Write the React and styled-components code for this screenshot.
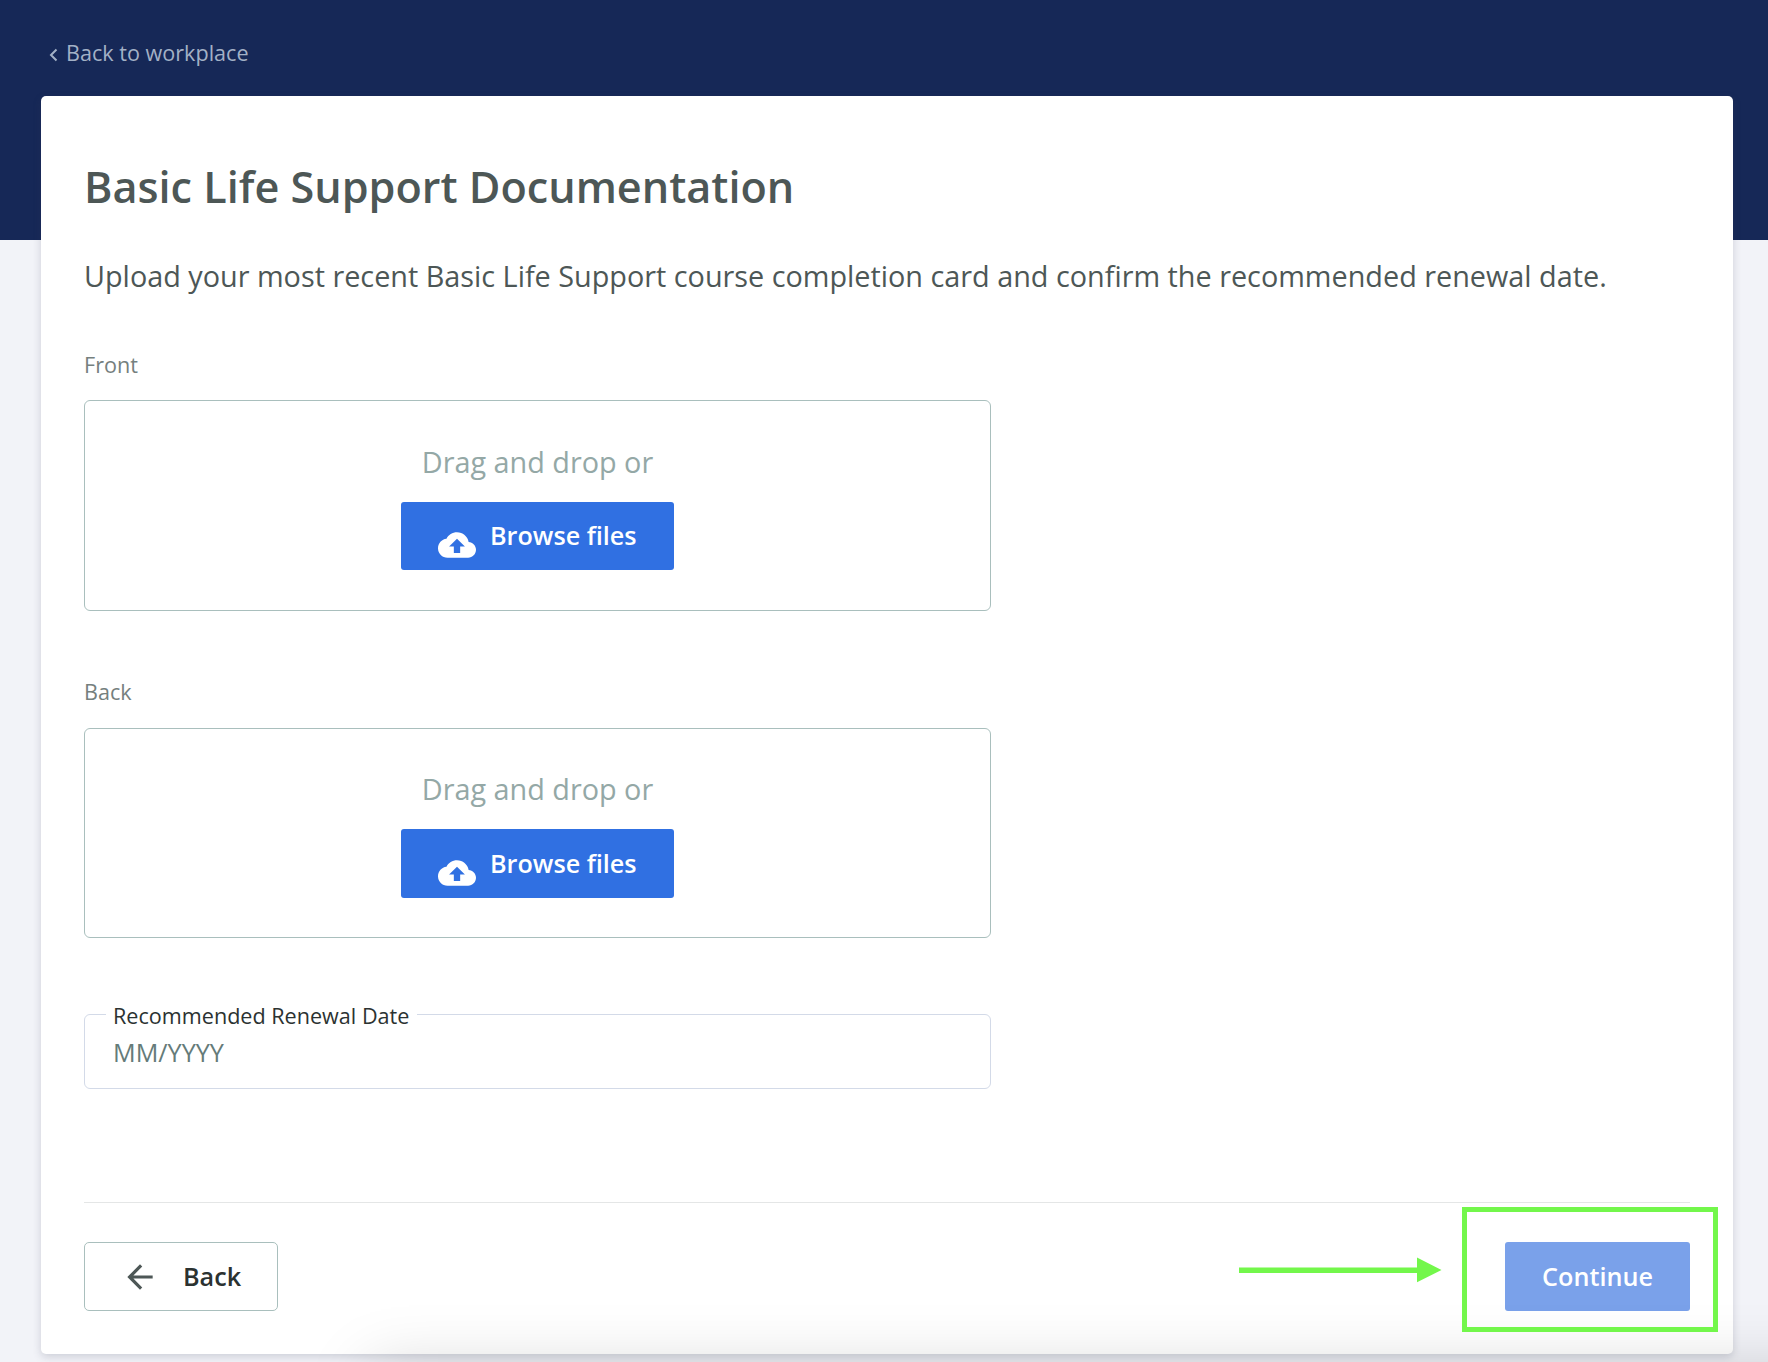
import styled, { createGlobalStyle } from "styled-components";

const GlobalStyle = createGlobalStyle`
  * {
    box-sizing: border-box;
  }

  body {
    margin: 0;
    background: #f2f3f8;
    font-family: "Open Sans", sans-serif;
    overflow: hidden;
  }

  button {
    font-family: inherit;
    margin: 0;
  }
`;

const Page = styled.div`
  position: relative;
  height: 1362px;
  padding: 0 35px 0 41px;
  overflow: hidden;
  background: linear-gradient(#162857 240px, #f2f3f8 240px);
`;

const TopBar = styled.header`
  display: flex;
  align-items: center;
  height: 96px;
  padding: 10px 0 0 8px;
`;

const BackLink = styled.a`
  display: flex;
  align-items: center;
  gap: 8px;
  color: #a3b1c6;
  font-size: 21.6px;
  line-height: 30px;

  svg {
    margin-top: 4px;
  }
`;

const Card = styled.main`
  height: 1258px;
  padding: 62px 43px 0;
  border-radius: 5px;
  background: #fff;
  box-shadow: 0 3px 8px rgba(60, 66, 90, 0.2);
`;

const Title = styled.h1`
  margin: 0;
  color: #4d5756;
  font-size: 43.2px;
  font-weight: 600;
  line-height: 58px;
`;

const Intro = styled.p`
  margin: 40px 0 0;
  color: #4d5756;
  font-size: 28.8px;
  line-height: 40px;
  white-space: nowrap;
`;

const Upload = styled.section`
  width: 907px;
  margin-top: ${props => props.$gap}px;
`;

const Label = styled.div`
  color: #75807e;
  font-size: 21.6px;
  line-height: 30px;
`;

const DropZone = styled.div`
  display: flex;
  flex-direction: column;
  align-items: center;
  height: 210.6px;
  margin-top: 20.4px;
  padding-top: 40.4px;
  border: 1px solid #a9bfbd;
  border-radius: 6px;
`;

const Hint = styled.div`
  color: #94a8a6;
  font-size: 28.8px;
  line-height: 40px;
`;

const BrowseButton = styled.button`
  display: flex;
  align-items: center;
  width: 273px;
  height: 68.4px;
  margin-top: 20px;
  padding: 0 0 0 37px;
  border: 0;
  border-radius: 3px;
  background: #3070e2;
  color: #fff;
  font-size: 25.2px;
  font-weight: 600;

  svg {
    margin: 18.5px 14px 0 0;
  }

  span {
    padding-bottom: 1.2px;
  }
`;

const DateField = styled.fieldset`
  width: 907px;
  height: 87px;
  margin: 63.6px 0 0;
  padding: 0 28px;
  border: 1px solid #d3dae8;
  border-radius: 6px;
`;

const Legend = styled.legend`
  margin-left: -7px;
  padding: 2px 8px 0 7px;
  color: #2b3231;
  font-size: 21.6px;
  line-height: 24px;
`;

const DateInput = styled.input`
  display: block;
  width: 100%;
  height: 36px;
  margin-top: 6px;
  padding: 0;
  border: 0;
  outline: 0;
  background: transparent;
  font-family: inherit;
  font-size: 25.2px;

  &::placeholder {
    color: #657b79;
    opacity: 1;
  }
`;

const Footer = styled.footer`
  display: flex;
  justify-content: space-between;
  margin-top: 113px;
  padding-top: 39px;
  border-top: 1px solid #e4e6e6;
`;

const BackButton = styled.button`
  display: flex;
  align-items: center;
  gap: 24px;
  width: 194px;
  height: 69px;
  padding: 0 0 0 36px;
  border: 1px solid #a9bfbd;
  border-radius: 5px;
  background: #fff;
  color: #2b3231;
  font-size: 25.2px;
  font-weight: 600;

  svg {
    margin-top: 1px;
  }

  span {
    padding-bottom: 1px;
  }
`;

const ContinueButton = styled.button`
  width: 185px;
  height: 69px;
  padding: 0 0 1px;
  border: 0;
  border-radius: 3px;
  background: #7aa1ea;
  color: #fff;
  font-size: 25.2px;
  font-weight: 600;
`;

const Highlight = styled.div`
  position: absolute;
  left: 1462px;
  top: 1207px;
  width: 256px;
  height: 125px;
  border: 5px solid #73f74b;
`;

const Pointer = styled.svg`
  position: absolute;
  left: 1239px;
  top: 1257px;
`;

// soft shade rising from the bottom edge of the window
const Shade = styled.div`
  position: absolute;
  left: 370px;
  right: -100px;
  top: 1368px;
  height: 200px;
  box-shadow: 0 0 60px rgba(0, 0, 0, 0.17);
  pointer-events: none;
`;

const CloudIcon = () => (
  <svg width="38" height="38" viewBox="0 0 24 24" fill="currentColor">
    <path d="M19.35 10.04C18.67 6.59 15.64 4 12 4 9.11 4 6.6 5.64 5.35 8.04 2.34 8.36 0 10.91 0 14c0 3.31 2.69 6 6 6h13c2.76 0 5-2.24 5-5 0-2.64-2.05-4.78-4.65-4.96zM14 13v4h-4v-4H7l5-5 5 5h-3z" />
  </svg>
);

const ArrowIcon = () => (
  <svg width="38" height="38" viewBox="0 0 24 24" fill="#4d5756">
    <path d="M20 11H7.83l5.59-5.59L12 4l-8 8 8 8 1.41-1.41L7.83 13H20v-2z" />
  </svg>
);

const FileUpload = ({ label, gap }) => (
  <Upload $gap={gap}>
    <Label>{label}</Label>
    <DropZone>
      <Hint>Drag and drop or</Hint>
      <BrowseButton>
        <CloudIcon />
        <span>Browse files</span>
      </BrowseButton>
    </DropZone>
  </Upload>
);

const App = () => (
  <>
    <GlobalStyle />
    <Page>
      <TopBar>
        <BackLink>
          <svg width="9" height="14" viewBox="0 0 9 14" fill="none">
            <path d="M7.5 1.5L2 7l5.5 5.5" stroke="currentColor" strokeWidth="2" />
          </svg>
          <span>Back to workplace</span>
        </BackLink>
      </TopBar>
      <Card>
        <Title>Basic Life Support Documentation</Title>
        <Intro>
          Upload your most recent Basic Life Support course completion card and
          confirm the recommended renewal date.
        </Intro>
        <FileUpload label="Front" gap={53.8} />
        <FileUpload label="Back" gap={66.6} />
        <DateField>
          <Legend>Recommended Renewal Date</Legend>
          <DateInput placeholder="MM/YYYY" />
        </DateField>
        <Footer>
          <BackButton>
            <ArrowIcon />
            <span>Back</span>
          </BackButton>
          <ContinueButton>Continue</ContinueButton>
        </Footer>
      </Card>
      <Shade />
      <Pointer width="203" height="26" viewBox="0 0 203 26" fill="#73f74b">
        <path d="M0 10.5h178V.5l24.5 12.5L178 25.3V16H0z" />
      </Pointer>
      <Highlight />
    </Page>
  </>
);

export default App;
